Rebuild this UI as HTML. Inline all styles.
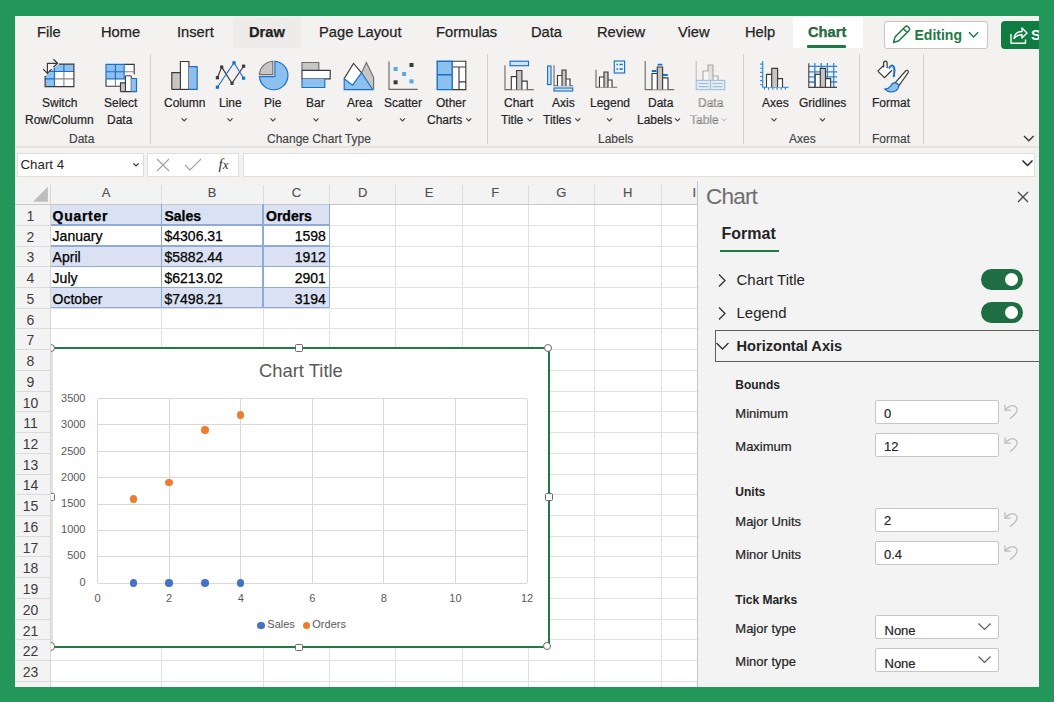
<!DOCTYPE html>
<html><head><meta charset="utf-8">
<style>
*{box-sizing:border-box;margin:0;padding:0}
html,body{width:1054px;height:702px;overflow:hidden;background:#23965a}
body{position:relative;font-family:"Liberation Sans",sans-serif;color:#242424}
#app{position:absolute;left:15px;top:16px;width:1024px;height:671px;background:#f3f2f1;overflow:hidden}
.a{position:absolute}
.t{position:absolute;white-space:nowrap;line-height:1}
.tab{font-size:14.7px;color:#242424;-webkit-text-stroke:0.25px #242424}
.rl{font-size:12px;color:#242424;-webkit-text-stroke:0.2px #242424}
.gl{font-size:12px;color:#424242;-webkit-text-stroke:0.15px #424242}
.sep{position:absolute;width:1px;background:#d2d0ce}
.chev{position:absolute;width:5px;height:5px;border-right:1.3px solid #484644;border-bottom:1.3px solid #484644;transform:rotate(45deg)}
.hdr{font-size:13px;color:#505050;-webkit-text-stroke:0.15px #505050}
.rowh{font-size:14px;color:#3c3c3c}
.cell{font-size:14px;color:#000;-webkit-text-stroke:0.25px #000}
.ax{font-size:11px;color:#595959}
.dot{width:7.5px;height:7.5px;border-radius:50%}
.pb{font-size:12px;font-weight:bold;color:#242424}
.pl{font-size:13px;color:#242424;-webkit-text-stroke:0.2px #242424}
.pv{font-size:13px;color:#242424;-webkit-text-stroke:0.2px #242424}
.inp{width:124px;height:24px;background:#fff;border:1.3px solid #c8c6c4;border-radius:2px}
</style></head><body>
<div id="app">
<div style="position:absolute;left:-15px;top:-16px;width:1054px;height:702px">
<!-- TAB BAR -->
<div class="a" style="left:233px;top:17px;width:68px;height:31px;background:#edecea"></div>
<div class="a" style="left:793px;top:17px;width:70px;height:31px;background:#fff"></div>
<div class="t tab" style="left:37px;top:25px">File</div>
<div class="t tab" style="left:101px;top:25px">Home</div>
<div class="t tab" style="left:177px;top:25px">Insert</div>
<div class="t tab" style="left:249px;top:25px;font-weight:bold;color:#242424">Draw</div>
<div class="t tab" style="left:319px;top:25px">Page Layout</div>
<div class="t tab" style="left:436px;top:25px">Formulas</div>
<div class="t tab" style="left:531px;top:25px">Data</div>
<div class="t tab" style="left:597px;top:25px">Review</div>
<div class="t tab" style="left:678px;top:25px">View</div>
<div class="t tab" style="left:745px;top:25px">Help</div>
<div class="t tab" style="left:808px;top:25px;font-weight:bold;color:#1e7a45">Chart</div>
<div class="a" style="left:807px;top:45px;width:39px;height:3px;background:#1e7a45;border-radius:1px"></div>
<!-- Editing button -->
<div class="a" style="left:884px;top:20.5px;width:104px;height:28px;background:#fff;border:1.5px solid #c8c6c4;border-radius:3px"></div>
<div class="t" style="left:914.5px;top:28px;font-size:14px;font-weight:bold;color:#1e7a45">Editing</div>
<!-- Share button -->
<div class="a" style="left:1001px;top:20.5px;width:60px;height:28px;background:#107c41;border-radius:4px"></div>
<div class="t" style="left:1031px;top:27.5px;font-size:14.7px;font-weight:bold;color:#fff">Share</div>

<!-- RIBBON labels -->
<div class="t rl" style="left:42px;top:97px">Switch</div>
<div class="t rl" style="left:25px;top:113.5px">Row/Column</div>
<div class="t rl" style="left:104px;top:97px">Select</div>
<div class="t rl" style="left:107px;top:113.5px">Data</div>
<div class="t gl" style="left:69px;top:133px">Data</div>
<div class="sep" style="left:150px;top:54px;height:90px"></div>

<div class="t rl" style="left:164px;top:97px">Column</div>
<div class="t rl" style="left:219px;top:97px">Line</div>
<div class="t rl" style="left:264px;top:97px">Pie</div>
<div class="t rl" style="left:306px;top:97px">Bar</div>
<div class="t rl" style="left:347px;top:97px">Area</div>
<div class="t rl" style="left:384px;top:97px">Scatter</div>
<div class="t rl" style="left:436px;top:97px">Other</div>
<div class="t rl" style="left:427px;top:113.5px">Charts</div>
<div class="t gl" style="left:267px;top:133px">Change Chart Type</div>
<div class="sep" style="left:487px;top:54px;height:90px"></div>

<div class="t rl" style="left:504px;top:97px">Chart</div>
<div class="t rl" style="left:501px;top:113.5px">Title</div>
<div class="t rl" style="left:552px;top:97px">Axis</div>
<div class="t rl" style="left:543px;top:113.5px">Titles</div>
<div class="t rl" style="left:590px;top:97px">Legend</div>
<div class="t rl" style="left:648px;top:97px">Data</div>
<div class="t rl" style="left:637px;top:113.5px">Labels</div>
<div class="t rl" style="left:698px;top:97px;color:#bebbb8">Data</div>
<div class="t rl" style="left:690px;top:113.5px;color:#bebbb8">Table</div>
<div class="t gl" style="left:598px;top:133px">Labels</div>
<div class="sep" style="left:743px;top:54px;height:90px"></div>

<div class="t rl" style="left:762px;top:97px">Axes</div>
<div class="t rl" style="left:799px;top:97px">Gridlines</div>
<div class="t gl" style="left:789px;top:133px">Axes</div>
<div class="sep" style="left:859px;top:54px;height:90px"></div>
<div class="t rl" style="left:872px;top:97px">Format</div>
<div class="t gl" style="left:872px;top:133px">Format</div>
<div class="sep" style="left:923px;top:54px;height:90px"></div>

<!-- RIBBON ICONS -->
<svg class="a" style="left:0;top:0" width="1054" height="150" viewBox="0 0 1054 150">
<defs>
<style>
.ds{stroke:#3b3a39;stroke-width:1.15;fill:none}
.bs{stroke:#1c6fc2;stroke-width:1.15;fill:none}
.bf{fill:#8cc0ee}
.gf{fill:#c8c6c4}
.wf{fill:#fff}
.ch{stroke:#484644;stroke-width:1.2;fill:none}
</style>
</defs>
<!-- Switch Row/Column -->
<path class="wf" d="M45.1 76 L59 64.1 H73.9 V86.6 H45.1 Z"/>
<path class="bf" d="M45.1 76 L59 64.1 H73.9 V71.5 H54.5 V86.6 H45.1 Z"/>
<path stroke="#8a8886" stroke-width="1.1" fill="none" d="M54.5 78.9 H73.9 M63.9 71.5 V86.6"/>
<path class="bs" d="M54.5 67.8 V86.6 M50 71.5 H73.9 M45.1 78.9 H54.5 M63.9 64.1 V71.5"/>
<path class="ds" d="M59 64.1 H73.9 V86.6 H45.1 V76"/>
<path class="ds" d="M47.4 72.6 V63.3 H57.3 M53.4 59.3 L57.6 63.3 L53.4 67.3 M43.2 69.1 L47.4 73.3 L51.6 69.1" style="stroke-width:1.2"/>
<!-- Select Data -->
<path class="bf" d="M106 64.3 H124.2 V78.8 H106 Z"/>
<path class="wf" d="M124.2 64.3 H134.2 V86.2 H106 V78.8 H124.2 Z"/>
<path class="ds" d="M124.2 64.3 H134.2 V74.5 M120 86.2 H106 V78.8"/>
<path stroke="#8a8886" stroke-width="1.1" fill="none" d="M124.2 71.7 H134.2 M115.4 78.8 V86.2"/>
<path class="bs" d="M106 78.8 V64.3 H124.2 V78.8 H106 M115.4 64.3 V78.8 M106 71.7 H124.2"/>
<path class="gf" d="M120.5 82.8 H125.4 V91.6 H120.5 Z"/><path class="ds" d="M120.5 91.6 V82.8 H125.4"/>
<path class="wf" d="M125.4 91.6 V76.8 Q125.4 75.7 126.5 75.7 H130.2 Q131.3 75.7 131.3 76.8 V91.6 Z"/>
<path class="ds" d="M120.5 91.6 H131.3 M125.4 91.6 V76.8 Q125.4 75.7 126.5 75.7 H130.2 Q131.3 75.7 131.3 76.8 V91.6"/>
<path class="bf" d="M131.3 78.5 H136.5 V91.6 H131.3 Z"/><path class="bs" d="M131.3 78.5 H136.5 V91.6 H131.3"/>
<!-- Column -->
<path class="gf" d="M171.8 72.6 H180.4 V89.4 H171.8 Z"/><path class="ds" d="M171.8 89.4 V72.6 H180.4"/>
<path class="wf" d="M180.4 61.5 H188.9 V89.4 H180.4 Z"/><path class="ds" d="M180.4 89.4 V61.5 H188.9 V89.4"/>
<path class="bf" d="M188.9 66.6 H197.2 V89.4 H188.9 Z"/><path class="bs" d="M188.9 66.6 H197.2 V89.4 H188.9"/>
<path class="ds" d="M171.8 89.4 H188.9"/>
<!-- Line -->
<path class="ds" d="M217.4 77.7 L221.7 67.1 L232 83.3 L243.6 66.2"/>
<path class="bs" d="M217.4 87.2 L234 62.8 L243.6 78.2"/>
<g fill="#3b3a39"><rect x="215.8" y="76.1" width="3.2" height="3.2"/><rect x="220.1" y="65.5" width="3.2" height="3.2"/><rect x="230.4" y="81.7" width="3.2" height="3.2"/><rect x="242" y="64.6" width="3.2" height="3.2"/></g>
<g fill="#1c6fc2"><rect x="215.8" y="85.6" width="3.2" height="3.2"/><rect x="232.4" y="61.2" width="3.2" height="3.2"/><rect x="242" y="76.6" width="3.2" height="3.2"/></g>
<!-- Pie -->
<path class="bf" d="M274.9 76.6 V61.2 A14.3 14.3 0 1 1 259.4 76.6 Z"/>
<path class="bs" d="M274.9 76.6 V61.2 A14.3 14.3 0 1 1 259.4 76.6 Z"/>
<path class="gf" d="M272.8 74.6 V61.2 A14.3 14.3 0 0 0 259.4 74.6 Z"/>
<path class="ds" d="M272.8 74.6 V61.2 A14.3 14.3 0 0 0 259.4 74.6 Z" style="stroke:#6e6d6b"/>
<!-- Bar -->
<path class="gf" d="M302 62.5 H318.8 V70.4 H302 Z"/><path class="ds" d="M302 70.4 V62.5 H318.8 V70.4" style="stroke:#6e6d6b"/>
<path class="wf" d="M302 70.4 H330.2 V78.8 H302 Z"/><path class="ds" d="M302 70.4 H330.2 V78.8 H302 Z"/>
<path class="bf" d="M302 78.8 H324.8 V87.5 H302 Z"/><path class="bs" d="M302 78.8 V87.5 H324.8 V78.8"/>
<!-- Area -->
<path class="gf" d="M361.6 72.8 L366.4 62.6 L373.6 77.3 V89.6 Z"/>
<path class="ds" d="M361.6 72.8 L366.4 62.6 L373.6 77.3 V89.6" style="stroke:#6e6d6b"/>
<path class="wf" d="M344.2 78.6 L353.5 63.4 L361.6 72.8 L352.5 85 Z"/>
<path class="ds" d="M344.2 78.6 L353.5 63.4 L361.6 72.8"/>
<path class="bf" d="M344.2 78.8 L352.5 85.2 L361.6 72.8 L372.8 89.6 H344.2 Z"/>
<path class="bs" d="M344.2 78.8 L352.5 85.2 L361.6 72.8 L372.8 89.6 H344.2 Z"/>
<!-- Scatter -->
<path class="ds" d="M389 61.4 V89.4 H417.7" style="stroke:#6e6d6b"/>
<g fill="#3b3a39"><rect x="409.5" y="63" width="4" height="4"/><rect x="393.6" y="80.3" width="4" height="4"/></g>
<g fill="#5aa6ec"><rect x="393.6" y="67" width="4" height="4"/><rect x="402.1" y="72" width="4" height="4"/><rect x="409.5" y="79.4" width="4" height="4"/></g>
<!-- Other charts -->
<path class="wf" d="M452.2 61.2 H465.8 V89.6 H452.2 Z"/>
<path class="ds" d="M452.2 61.2 H465.8 V89.6 H452.2 M452.2 67 H465.8 M459 67 V89.6 M459 81.9 H465.8"/>
<path class="bf" d="M437.2 61.2 H452.2 V89.6 H437.2 Z"/>
<path class="bs" d="M437.2 61.2 H452.2 V89.6 H437.2 Z M437.2 74.7 H452.2" style="stroke-width:1.4"/>
<!-- Chart Title -->
<rect x="510" y="61.2" width="18.5" height="4.5" class="bf" style="fill:#cfe4f7"/><rect x="510" y="61.2" width="18.5" height="4.5" class="bs"/>
<path class="ds" d="M505 65.2 V89.6 H533.7" style="stroke:#6e6d6b"/>
<path class="wf" d="M511.3 76.6 H516.6 V89.6 H511.3 Z M521.9 81.1 H527.2 V89.6 H521.9 Z"/>
<path class="gf" d="M516.6 70.5 H521.9 V89.6 H516.6 Z"/>
<path class="ds" d="M511.3 89.6 V76.6 H516.6 V70.5 H521.9 V89.6 M521.9 81.1 H527.2 V89.6 M516.6 76.6 V89.6"/>
<!-- Axis Titles -->
<rect x="547.6" y="66" width="3.4" height="18.6" class="bf" style="fill:#cfe4f7"/><rect x="547.6" y="66" width="3.4" height="18.6" class="bs"/>
<rect x="554" y="88" width="18.7" height="3" class="bf" style="fill:#cfe4f7"/><rect x="554" y="88" width="18.7" height="3" class="bs"/>
<path class="ds" d="M554 65.2 V85.7 H573.2" style="stroke:#6e6d6b"/>
<path class="wf" d="M557.5 75.5 H562 V85.7 H557.5 Z M566 79 H570 V85.7 H566 Z"/>
<path class="gf" d="M562 70 H566 V85.7 H562 Z"/>
<path class="ds" d="M557.5 85.7 V75.5 H562 V70 H566 V85.7 M566 79 H570 V85.7 M562 75.5 V85.7"/>
<!-- Legend -->
<path class="ds" d="M596 69.7 V87.2 H617.2" style="stroke:#6e6d6b"/>
<path class="wf" d="M599.5 77 H604 V87.2 H599.5 Z M608 80 H612 V87.2 H608 Z"/>
<path class="gf" d="M604 72 H608 V87.2 H604 Z"/>
<path class="ds" d="M599.5 87.2 V77 H604 V72 H608 V87.2 M608 80 H612 V87.2 M604 77 V87.2"/>
<rect x="614.3" y="61" width="10.3" height="12" class="bs" style="fill:#e8f2fb"/>
<path stroke="#1c6fc2" stroke-width="1.4" d="M616.5 64.5 H618 M619.5 64.5 H622.8 M616.5 69 H618 M619.5 69 H622.8"/>
<!-- Data Labels -->
<path class="ds" d="M645.2 60.9 V89.6 H674.3" style="stroke:#6e6d6b"/>
<path class="wf" d="M652 73.5 H657.3 V89.6 H652 Z M662.6 77.8 H668 V89.6 H662.6 Z"/>
<path class="gf" d="M657.3 67 H662.6 V89.6 H657.3 Z"/>
<path class="ds" d="M652 89.6 V73.5 H657.3 V67 H662.6 V89.6 M662.6 77.8 H668 V89.6 M657.3 73.5 V89.6"/>
<path stroke="#1c6fc2" stroke-width="1.8" d="M651.8 71 H656.5 M657.6 64.7 H662.3 M663 75 H667.8"/>
<!-- Data Table (disabled) -->
<g opacity="0.38">
<path class="ds" d="M696.2 60.9 V80.4" style="stroke:#6e6d6b"/>
<path class="wf" d="M703 71 H708 V80.4 H703 Z M713 76 H718 V80.4 H713 Z"/>
<path class="gf" d="M708 65 H713 V80.4 H708 Z"/>
<path class="ds" d="M703 80.4 V71 H708 V65 H713 V80.4 M713 76 H718 V80.4"/>
<rect x="696.2" y="80.4" width="28.5" height="9.2" class="bs" style="fill:#cfe4f7"/>
<path class="bs" d="M710.5 80.4 V89.6 M698.5 83.5 H708.5 M712.5 83.5 H722.5 M698.5 86.6 H708.5 M712.5 86.6 H722.5"/>
</g>
<!-- Axes -->
<path class="bs" d="M762.7 61.1 V87.2 H788.7 M760.1 64.1 H762.7 M760.1 68.2 H762.7 M760.1 72.3 H762.7 M760.1 76.5 H762.7 M760.1 80.6 H762.7 M760.1 84.7 H762.7 M764.4 87.2 V89.8 M768.6 87.2 V89.8 M772.8 87.2 V89.8 M777 87.2 V89.8 M781.2 87.2 V89.8 M785.4 87.2 V89.8" style="stroke:#2b88d8"/>
<path class="wf" d="M766.5 74.4 H771.7 V87.2 H766.5 Z M777.6 78.6 H782.5 V87.2 H777.6 Z"/>
<path class="gf" d="M771.7 68.4 H777.6 V87.2 H771.7 Z"/>
<path class="ds" d="M766.5 87.2 V74.4 H771.7 V68.4 H777.6 V87.2 M777.6 78.6 H782.5 V87.2 M771.7 74.4 V87.2"/>
<!-- Gridlines -->
<path class="bs" d="M814.8 63 V87.3 M821.2 63 V87.3 M827.4 63 V87.3 M833.7 63 V87.3 M808.8 66.4 H837.2 M808.8 71.8 H837.2 M808.8 76.9 H837.2 M808.8 82 H837.2" style="stroke:#2b88d8;stroke-width:1.3"/>
<path class="wf" d="M815.2 74.4 H820.3 V87.3 H815.2 Z M825.5 78.6 H830.6 V87.3 H825.5 Z"/>
<path class="gf" d="M820.3 68.4 H825.5 V87.3 H820.3 Z"/>
<path class="ds" d="M815.2 87.3 V74.4 H820.3 V68.4 H825.5 V87.3 M825.5 78.6 H830.6 V87.3 M820.3 74.4 V87.3"/>
<path class="ds" d="M808.8 63.3 V87.4 H837" style="stroke:#484644"/>
<!-- Format -->
<path class="wf" d="M877.8 71.1 L884.5 77.7 L891.9 70.2 L887.1 65.7 Z"/>
<path class="ds" d="M877.8 71.1 L884.5 77.7 L891.9 70.2 M877.8 71.1 L883.6 65.4 M883.6 67.5 V63.2 Q883.6 61.1 885.4 61.1 Q887.1 61.1 887.1 63.2 V68.3" style="stroke-width:1.25"/>
<path d="M889.4 67.6 Q892.6 63.6 894.2 67.8 Q894.9 71 893.8 76.3" fill="none" stroke="#1c6fc2" stroke-width="2.1" stroke-linecap="round"/><path d="M890.2 67.2 Q892.4 65.4 893.3 68" fill="none" stroke="#8cc0ee" stroke-width="0.9"/>
<path d="M894.6 83.4 L905.6 71 Q907.6 69.4 908.4 71.6 Q908.4 72.4 907.8 73.2 L898.4 86.4 Z" fill="#fff" stroke="#3b3a39" stroke-width="1.15" stroke-linejoin="round"/>
<path d="M894.4 82.6 Q898.9 83.2 898.6 86.8 Q897.6 91.4 891.2 91.9 Q887.4 92 884.8 89.2 Q888.6 88.9 890.4 86.4 Q891.9 83.2 894.4 82.6 Z" fill="#8cc0ee" stroke="#1c6fc2" stroke-width="1.2"/>
<!-- chevrons -->
<path class="ch" d="M181.7 118.3 L184.2 120.8 L186.7 118.3"/>
<path class="ch" d="M227.5 118.3 L230 120.8 L232.5 118.3"/>
<path class="ch" d="M270.5 118.3 L273 120.8 L275.5 118.3"/>
<path class="ch" d="M313.5 118.3 L316 120.8 L318.5 118.3"/>
<path class="ch" d="M356.5 118.3 L359 120.8 L361.5 118.3"/>
<path class="ch" d="M400 118.3 L402.5 120.8 L405 118.3"/>
<path class="ch" d="M466.3 118.3 L468.8 120.8 L471.3 118.3"/>
<path class="ch" d="M527.5 118.3 L530 120.8 L532.5 118.3"/>
<path class="ch" d="M575.3 118.3 L577.8 120.8 L580.3 118.3"/>
<path class="ch" d="M607 118.3 L609.5 120.8 L612 118.3"/>
<path class="ch" d="M675 118.3 L677.5 120.8 L680 118.3"/>
<path class="ch" d="M721.5 118.3 L724 120.8 L726.5 118.3" style="stroke:#c8c6c4"/>
<path class="ch" d="M771.5 118.3 L774 120.8 L776.5 118.3"/>
<path class="ch" d="M820 118.3 L822.5 120.8 L825 118.3"/>
<path d="M1024 136 L1028.8 140.8 L1033.6 136" stroke="#323130" stroke-width="1.3" fill="none"/>
<!-- Editing pencil & chevron -->
<path d="M893.6 42.6 L895 37 L905.2 26.8 Q906.6 25.5 908 26.8 L909 27.8 Q910.3 29.2 909 30.6 L898.8 40.8 Z M903.3 28.7 L907.1 32.5" stroke="#1e7a45" stroke-width="1.5" fill="none" stroke-linejoin="round"/>
<path d="M969 32.3 L973.6 36.9 L978.2 32.3" stroke="#1e7a45" stroke-width="1.4" fill="none"/>
<!-- Share icon -->
<path d="M1011 34 V43.3 H1025.5 V39.5 M1014 38.5 Q1015 31.5 1022 31.5 V28 L1027 33 L1022 38 V34.8 Q1017.5 34.5 1014 38.5 Z" stroke="#fff" stroke-width="1.4" fill="none" stroke-linejoin="round"/>
</svg>

<!-- ribbon bottom shadow -->
<div class="a" style="left:15px;top:146px;width:1024px;height:2px;background:#e6e4e2"></div>

<!-- FORMULA BAR -->
<div class="a" style="left:17px;top:152.5px;width:126.5px;height:24.5px;background:#fff;border:1px solid #e1dfdd"></div>
<div class="t" style="left:20.5px;top:157.8px;font-size:13.3px;color:#242424">Chart 4</div>
<svg class="a" style="left:132px;top:161.5px" width="8" height="6"><path d="M1.3 1.3 L4 4 L6.7 1.3" fill="none" stroke="#323130" stroke-width="1.2"/></svg>
<div class="a" style="left:147px;top:152.5px;width:92px;height:24.5px;background:#fff;border:1px solid #e1dfdd"></div>
<svg class="a" style="left:156px;top:158px" width="14" height="14"><path d="M1 1 L13 13 M13 1 L1 13" stroke="#a19f9d" stroke-width="1.1" fill="none"/></svg>
<svg class="a" style="left:184px;top:158px" width="18" height="13"><path d="M1 7 L6 12 L17 1" stroke="#a19f9d" stroke-width="1.1" fill="none"/></svg>
<div class="t" style="left:218.5px;top:157px;font-family:'Liberation Serif',serif;font-style:italic;font-size:15px;color:#323130">f<span style="font-size:13px">x</span></div>
<div class="a" style="left:243px;top:152.5px;width:792px;height:24px;background:#fff;border:1px solid #e1dfdd"></div>
<svg class="a" style="left:1021px;top:159px" width="13" height="9"><path d="M1.5 1.5 L6.5 6.5 L11.5 1.5" fill="none" stroke="#242424" stroke-width="1.5"/></svg>

<div class="a" style="left:15px;top:184px;width:682px;height:20px;background:#f3f3f3"></div>
<div class="a" style="left:15px;top:204px;width:35.5px;height:483px;background:#f3f3f3"></div>
<div class="a" style="left:50.5px;top:204.5px;width:647px;height:483px;background:#fff"></div>
<div class="a" style="left:15px;top:203.5px;width:682px;height:1px;background:#c8c8c8"></div>
<div class="a" style="left:49.5px;top:185px;width:1.2px;height:502px;background:#d6d6d6"></div>
<svg class="a" style="left:32px;top:186px" width="17" height="17"><path d="M1 15.7 L15.9 15.7 L15.9 0.7 Z" fill="#bdbdbd"/></svg>
<div class="a" style="left:161.0px;top:185px;width:1px;height:19px;background:#dcdcdc"></div>
<div class="a" style="left:161.0px;top:204.5px;width:1px;height:483px;background:#e1e1e1"></div>
<div class="a" style="left:262.5px;top:185px;width:1px;height:19px;background:#dcdcdc"></div>
<div class="a" style="left:262.5px;top:204.5px;width:1px;height:483px;background:#e1e1e1"></div>
<div class="a" style="left:329.2px;top:185px;width:1px;height:19px;background:#dcdcdc"></div>
<div class="a" style="left:329.2px;top:204.5px;width:1px;height:483px;background:#e1e1e1"></div>
<div class="a" style="left:395.3px;top:185px;width:1px;height:19px;background:#dcdcdc"></div>
<div class="a" style="left:395.3px;top:204.5px;width:1px;height:483px;background:#e1e1e1"></div>
<div class="a" style="left:461.8px;top:185px;width:1px;height:19px;background:#dcdcdc"></div>
<div class="a" style="left:461.8px;top:204.5px;width:1px;height:483px;background:#e1e1e1"></div>
<div class="a" style="left:527.8px;top:185px;width:1px;height:19px;background:#dcdcdc"></div>
<div class="a" style="left:527.8px;top:204.5px;width:1px;height:483px;background:#e1e1e1"></div>
<div class="a" style="left:594.0px;top:185px;width:1px;height:19px;background:#dcdcdc"></div>
<div class="a" style="left:594.0px;top:204.5px;width:1px;height:483px;background:#e1e1e1"></div>
<div class="a" style="left:660.6px;top:185px;width:1px;height:19px;background:#dcdcdc"></div>
<div class="a" style="left:660.6px;top:204.5px;width:1px;height:483px;background:#e1e1e1"></div>
<div class="a" style="left:726.8px;top:185px;width:1px;height:19px;background:#dcdcdc"></div>
<div class="a" style="left:726.8px;top:204.5px;width:1px;height:483px;background:#e1e1e1"></div>
<div class="t hdr" style="left:96.0px;top:185.5px;width:20px;text-align:center">A</div>
<div class="t hdr" style="left:202.2px;top:185.5px;width:20px;text-align:center">B</div>
<div class="t hdr" style="left:286.4px;top:185.5px;width:20px;text-align:center">C</div>
<div class="t hdr" style="left:352.8px;top:185.5px;width:20px;text-align:center">D</div>
<div class="t hdr" style="left:419.1px;top:185.5px;width:20px;text-align:center">E</div>
<div class="t hdr" style="left:485.3px;top:185.5px;width:20px;text-align:center">F</div>
<div class="t hdr" style="left:551.4px;top:185.5px;width:20px;text-align:center">G</div>
<div class="t hdr" style="left:617.8px;top:185.5px;width:20px;text-align:center">H</div>
<div class="t hdr" style="left:684.2px;top:185.5px;width:20px;text-align:center">I</div>
<div class="a" style="left:15px;top:224.7px;width:35px;height:1px;background:#dcdcdc"></div>
<div class="a" style="left:50.5px;top:224.7px;width:647px;height:1px;background:#e1e1e1"></div>
<div class="a" style="left:15px;top:245.5px;width:35px;height:1px;background:#dcdcdc"></div>
<div class="a" style="left:50.5px;top:245.5px;width:647px;height:1px;background:#e1e1e1"></div>
<div class="a" style="left:15px;top:266.2px;width:35px;height:1px;background:#dcdcdc"></div>
<div class="a" style="left:50.5px;top:266.2px;width:647px;height:1px;background:#e1e1e1"></div>
<div class="a" style="left:15px;top:286.9px;width:35px;height:1px;background:#dcdcdc"></div>
<div class="a" style="left:50.5px;top:286.9px;width:647px;height:1px;background:#e1e1e1"></div>
<div class="a" style="left:15px;top:307.6px;width:35px;height:1px;background:#dcdcdc"></div>
<div class="a" style="left:50.5px;top:307.6px;width:647px;height:1px;background:#e1e1e1"></div>
<div class="a" style="left:15px;top:328.4px;width:35px;height:1px;background:#dcdcdc"></div>
<div class="a" style="left:50.5px;top:328.4px;width:647px;height:1px;background:#e1e1e1"></div>
<div class="a" style="left:15px;top:349.1px;width:35px;height:1px;background:#dcdcdc"></div>
<div class="a" style="left:50.5px;top:349.1px;width:647px;height:1px;background:#e1e1e1"></div>
<div class="a" style="left:15px;top:369.8px;width:35px;height:1px;background:#dcdcdc"></div>
<div class="a" style="left:50.5px;top:369.8px;width:647px;height:1px;background:#e1e1e1"></div>
<div class="a" style="left:15px;top:390.5px;width:35px;height:1px;background:#dcdcdc"></div>
<div class="a" style="left:50.5px;top:390.5px;width:647px;height:1px;background:#e1e1e1"></div>
<div class="a" style="left:15px;top:411.3px;width:35px;height:1px;background:#dcdcdc"></div>
<div class="a" style="left:50.5px;top:411.3px;width:647px;height:1px;background:#e1e1e1"></div>
<div class="a" style="left:15px;top:432.0px;width:35px;height:1px;background:#dcdcdc"></div>
<div class="a" style="left:50.5px;top:432.0px;width:647px;height:1px;background:#e1e1e1"></div>
<div class="a" style="left:15px;top:452.7px;width:35px;height:1px;background:#dcdcdc"></div>
<div class="a" style="left:50.5px;top:452.7px;width:647px;height:1px;background:#e1e1e1"></div>
<div class="a" style="left:15px;top:473.5px;width:35px;height:1px;background:#dcdcdc"></div>
<div class="a" style="left:50.5px;top:473.5px;width:647px;height:1px;background:#e1e1e1"></div>
<div class="a" style="left:15px;top:494.2px;width:35px;height:1px;background:#dcdcdc"></div>
<div class="a" style="left:50.5px;top:494.2px;width:647px;height:1px;background:#e1e1e1"></div>
<div class="a" style="left:15px;top:514.9px;width:35px;height:1px;background:#dcdcdc"></div>
<div class="a" style="left:50.5px;top:514.9px;width:647px;height:1px;background:#e1e1e1"></div>
<div class="a" style="left:15px;top:535.6px;width:35px;height:1px;background:#dcdcdc"></div>
<div class="a" style="left:50.5px;top:535.6px;width:647px;height:1px;background:#e1e1e1"></div>
<div class="a" style="left:15px;top:556.4px;width:35px;height:1px;background:#dcdcdc"></div>
<div class="a" style="left:50.5px;top:556.4px;width:647px;height:1px;background:#e1e1e1"></div>
<div class="a" style="left:15px;top:577.1px;width:35px;height:1px;background:#dcdcdc"></div>
<div class="a" style="left:50.5px;top:577.1px;width:647px;height:1px;background:#e1e1e1"></div>
<div class="a" style="left:15px;top:597.8px;width:35px;height:1px;background:#dcdcdc"></div>
<div class="a" style="left:50.5px;top:597.8px;width:647px;height:1px;background:#e1e1e1"></div>
<div class="a" style="left:15px;top:618.5px;width:35px;height:1px;background:#dcdcdc"></div>
<div class="a" style="left:50.5px;top:618.5px;width:647px;height:1px;background:#e1e1e1"></div>
<div class="a" style="left:15px;top:639.3px;width:35px;height:1px;background:#dcdcdc"></div>
<div class="a" style="left:50.5px;top:639.3px;width:647px;height:1px;background:#e1e1e1"></div>
<div class="a" style="left:15px;top:660.0px;width:35px;height:1px;background:#dcdcdc"></div>
<div class="a" style="left:50.5px;top:660.0px;width:647px;height:1px;background:#e1e1e1"></div>
<div class="a" style="left:15px;top:680.7px;width:35px;height:1px;background:#dcdcdc"></div>
<div class="a" style="left:50.5px;top:680.7px;width:647px;height:1px;background:#e1e1e1"></div>
<div class="a" style="left:15px;top:701.4px;width:35px;height:1px;background:#dcdcdc"></div>
<div class="a" style="left:50.5px;top:701.4px;width:647px;height:1px;background:#e1e1e1"></div>
<div class="t rowh" style="left:15px;top:209.0px;width:31px;text-align:center">1</div>
<div class="t rowh" style="left:15px;top:229.7px;width:31px;text-align:center">2</div>
<div class="t rowh" style="left:15px;top:250.4px;width:31px;text-align:center">3</div>
<div class="t rowh" style="left:15px;top:271.1px;width:31px;text-align:center">4</div>
<div class="t rowh" style="left:15px;top:291.9px;width:31px;text-align:center">5</div>
<div class="t rowh" style="left:15px;top:312.6px;width:31px;text-align:center">6</div>
<div class="t rowh" style="left:15px;top:333.3px;width:31px;text-align:center">7</div>
<div class="t rowh" style="left:15px;top:354.1px;width:31px;text-align:center">8</div>
<div class="t rowh" style="left:15px;top:374.8px;width:31px;text-align:center">9</div>
<div class="t rowh" style="left:15px;top:395.5px;width:31px;text-align:center">10</div>
<div class="t rowh" style="left:15px;top:416.2px;width:31px;text-align:center">11</div>
<div class="t rowh" style="left:15px;top:437.0px;width:31px;text-align:center">12</div>
<div class="t rowh" style="left:15px;top:457.7px;width:31px;text-align:center">13</div>
<div class="t rowh" style="left:15px;top:478.4px;width:31px;text-align:center">14</div>
<div class="t rowh" style="left:15px;top:499.1px;width:31px;text-align:center">15</div>
<div class="t rowh" style="left:15px;top:519.9px;width:31px;text-align:center">16</div>
<div class="t rowh" style="left:15px;top:540.6px;width:31px;text-align:center">17</div>
<div class="t rowh" style="left:15px;top:561.3px;width:31px;text-align:center">18</div>
<div class="t rowh" style="left:15px;top:582.0px;width:31px;text-align:center">19</div>
<div class="t rowh" style="left:15px;top:602.8px;width:31px;text-align:center">20</div>
<div class="t rowh" style="left:15px;top:623.5px;width:31px;text-align:center">21</div>
<div class="t rowh" style="left:15px;top:644.2px;width:31px;text-align:center">22</div>
<div class="t rowh" style="left:15px;top:665.0px;width:31px;text-align:center">23</div>
<div class="t rowh" style="left:15px;top:685.7px;width:31px;text-align:center">24</div>
<div class="a" style="left:50.5px;top:204.9px;width:279.2px;height:20.0px;background:#d9e1f2"></div>
<div class="a" style="left:50.5px;top:224.9px;width:279.2px;height:20.9px;background:#fff"></div>
<div class="a" style="left:50.5px;top:245.8px;width:279.2px;height:20.9px;background:#d9e1f2"></div>
<div class="a" style="left:50.5px;top:266.7px;width:279.2px;height:20.7px;background:#fff"></div>
<div class="a" style="left:50.5px;top:287.4px;width:279.2px;height:20.1px;background:#d9e1f2"></div>
<div class="a" style="left:50.5px;top:224.15px;width:279.9px;height:1.5px;background:#8eaadb"></div>
<div class="a" style="left:50.5px;top:245.05px;width:279.9px;height:1.5px;background:#8eaadb"></div>
<div class="a" style="left:50.5px;top:265.95px;width:279.9px;height:1.5px;background:#8eaadb"></div>
<div class="a" style="left:50.5px;top:286.65px;width:279.9px;height:1.5px;background:#8eaadb"></div>
<div class="a" style="left:50.5px;top:306.75px;width:279.9px;height:1.5px;background:#8eaadb"></div>
<div class="a" style="left:160.95px;top:204.15px;width:1.5px;height:104.1px;background:#8eaadb"></div>
<div class="a" style="left:262.25px;top:204.15px;width:1.5px;height:104.1px;background:#8eaadb"></div>
<div class="a" style="left:328.95px;top:204.15px;width:1.5px;height:104.1px;background:#8eaadb"></div>
<div class="t cell" style="left:52.6px;top:209.3px;font-weight:bold;letter-spacing:0.7px;">Quarter</div>
<div class="t cell" style="left:164.5px;top:209.3px;font-weight:bold;">Sales</div>
<div class="t cell" style="left:266px;top:209.3px;font-weight:bold;">Orders</div>
<div class="t cell" style="left:52.6px;top:229.3px;">January</div>
<div class="t cell" style="left:164.5px;top:229.3px;">$4306.31</div>
<div class="t cell" style="left:226px;width:99.8px;text-align:right;top:229.3px">1598</div>
<div class="t cell" style="left:52.6px;top:250.2px;">April</div>
<div class="t cell" style="left:164.5px;top:250.2px;">$5882.44</div>
<div class="t cell" style="left:226px;width:99.8px;text-align:right;top:250.2px">1912</div>
<div class="t cell" style="left:52.6px;top:271.1px;">July</div>
<div class="t cell" style="left:164.5px;top:271.1px;">$6213.02</div>
<div class="t cell" style="left:226px;width:99.8px;text-align:right;top:271.1px">2901</div>
<div class="t cell" style="left:52.6px;top:291.8px;">October</div>
<div class="t cell" style="left:164.5px;top:291.8px;">$7498.21</div>
<div class="t cell" style="left:226px;width:99.8px;text-align:right;top:291.8px">3194</div>
<div class="a" style="left:50.5px;top:0;width:1003px;height:702px;overflow:hidden"><div class="a" style="left:-50.5px;top:0;width:1054px;height:702px">
<!-- CHART -->
<div class="a" style="left:50.8px;top:346.8px;width:499.2px;height:301.2px;background:#fff;border:2px solid #1e7b45;border-left:2.2px solid #e3e3e3"></div>
<div class="a" style="left:97.0px;top:398.6px;width:1px;height:184.4px;background:#d9d9d9"></div>
<div class="t ax" style="left:82.5px;top:592.5px;width:30px;text-align:center">0</div>
<div class="a" style="left:168.6px;top:398.6px;width:1px;height:184.4px;background:#d9d9d9"></div>
<div class="t ax" style="left:154.1px;top:592.5px;width:30px;text-align:center">2</div>
<div class="a" style="left:240.2px;top:398.6px;width:1px;height:184.4px;background:#d9d9d9"></div>
<div class="t ax" style="left:225.7px;top:592.5px;width:30px;text-align:center">4</div>
<div class="a" style="left:311.8px;top:398.6px;width:1px;height:184.4px;background:#d9d9d9"></div>
<div class="t ax" style="left:297.2px;top:592.5px;width:30px;text-align:center">6</div>
<div class="a" style="left:383.3px;top:398.6px;width:1px;height:184.4px;background:#d9d9d9"></div>
<div class="t ax" style="left:368.8px;top:592.5px;width:30px;text-align:center">8</div>
<div class="a" style="left:454.9px;top:398.6px;width:1px;height:184.4px;background:#d9d9d9"></div>
<div class="t ax" style="left:440.4px;top:592.5px;width:30px;text-align:center">10</div>
<div class="a" style="left:526.5px;top:398.6px;width:1px;height:184.4px;background:#d9d9d9"></div>
<div class="t ax" style="left:512.0px;top:592.5px;width:30px;text-align:center">12</div>
<div class="a" style="left:97.5px;top:398.1px;width:429.5px;height:1px;background:#d9d9d9"></div>
<div class="t ax" style="left:40px;top:393.1px;width:45.5px;text-align:right">3500</div>
<div class="a" style="left:97.5px;top:424.4px;width:429.5px;height:1px;background:#d9d9d9"></div>
<div class="t ax" style="left:40px;top:419.3px;width:45.5px;text-align:right">3000</div>
<div class="a" style="left:97.5px;top:450.8px;width:429.5px;height:1px;background:#d9d9d9"></div>
<div class="t ax" style="left:40px;top:445.5px;width:45.5px;text-align:right">2500</div>
<div class="a" style="left:97.5px;top:477.1px;width:429.5px;height:1px;background:#d9d9d9"></div>
<div class="t ax" style="left:40px;top:471.7px;width:45.5px;text-align:right">2000</div>
<div class="a" style="left:97.5px;top:503.5px;width:429.5px;height:1px;background:#d9d9d9"></div>
<div class="t ax" style="left:40px;top:497.9px;width:45.5px;text-align:right">1500</div>
<div class="a" style="left:97.5px;top:529.8px;width:429.5px;height:1px;background:#d9d9d9"></div>
<div class="t ax" style="left:40px;top:524.1px;width:45.5px;text-align:right">1000</div>
<div class="a" style="left:97.5px;top:556.2px;width:429.5px;height:1px;background:#d9d9d9"></div>
<div class="t ax" style="left:40px;top:550.3px;width:45.5px;text-align:right">500</div>
<div class="a" style="left:97.5px;top:582.5px;width:429.5px;height:1px;background:#d9d9d9"></div>
<div class="t ax" style="left:40px;top:576.5px;width:45.5px;text-align:right">0</div>
<div class="a dot" style="left:129.5px;top:495.1px;background:#ed7d31"></div>
<div class="a dot" style="left:165.3px;top:478.5px;background:#ed7d31"></div>
<div class="a dot" style="left:201.1px;top:426.4px;background:#ed7d31"></div>
<div class="a dot" style="left:236.9px;top:411.0px;background:#ed7d31"></div>
<div class="a dot" style="left:129.5px;top:579.2px;background:#4472c4"></div>
<div class="a dot" style="left:165.3px;top:579.2px;background:#4472c4"></div>
<div class="a dot" style="left:201.1px;top:579.2px;background:#4472c4"></div>
<div class="a dot" style="left:236.9px;top:579.2px;background:#4472c4"></div>
<div class="t" style="left:259px;top:362px;font-size:18.4px;color:#595959">Chart Title</div>
<div class="a dot" style="left:257px;top:621.6px;background:#4472c4"></div>
<div class="t ax" style="left:267.3px;top:619px">Sales</div>
<div class="a dot" style="left:302.5px;top:621.6px;background:#ed7d31"></div>
<div class="t ax" style="left:312.3px;top:619px">Orders</div>
<div class="a" style="left:47.1px;top:343.7px;width:8.4px;height:8.4px;background:#fff;border:1.6px solid #6b6b6b;border-radius:50%"></div>
<div class="a" style="left:543.8px;top:343.7px;width:8.4px;height:8.4px;background:#fff;border:1.6px solid #6b6b6b;border-radius:50%"></div>
<div class="a" style="left:46.8px;top:642.3px;width:8.4px;height:8.4px;background:#fff;border:1.6px solid #6b6b6b;border-radius:50%"></div>
<div class="a" style="left:543.1px;top:642.1px;width:8.4px;height:8.4px;background:#fff;border:1.6px solid #6b6b6b;border-radius:50%"></div>
<div class="a" style="left:295.2px;top:344.1px;width:7.6px;height:7.6px;background:#fff;border:1.6px solid #6b6b6b;border-radius:1.5px"></div>
<div class="a" style="left:295.4px;top:643.6px;width:7.6px;height:7.6px;background:#fff;border:1.6px solid #6b6b6b;border-radius:1.5px"></div>
<div class="a" style="left:47.2px;top:493.2px;width:7.6px;height:7.6px;background:#fff;border:1.6px solid #6b6b6b;border-radius:1.5px"></div>
<div class="a" style="left:545.2px;top:493.2px;width:7.6px;height:7.6px;background:#fff;border:1.6px solid #6b6b6b;border-radius:1.5px"></div>

</div></div>
<!-- PANEL -->
<div class="a" style="left:696.5px;top:181px;width:343px;height:506px;background:#f3f3f3;border-left:1.2px solid #c8c6c4"></div>
<div class="t" style="left:706px;top:185.5px;font-size:22.6px;letter-spacing:-0.85px;color:#6e6e6e">Chart</div>
<svg class="a" style="left:1017px;top:191px" width="12" height="12"><path d="M1 1 L11 11 M11 1 L1 11" stroke="#484644" stroke-width="1.3" fill="none"/></svg>
<div class="t" style="left:721.5px;top:226px;font-size:16px;font-weight:bold;color:#242424">Format</div>
<div class="a" style="left:720px;top:249.6px;width:59px;height:2.4px;background:#1e7a45"></div>

<svg class="a" style="left:717px;top:273px" width="10" height="16"><path d="M2 1.5 L8 7.5 L2 13.5" fill="none" stroke="#323130" stroke-width="1.3"/></svg>
<div class="t" style="left:736.5px;top:272px;font-size:15px;color:#242424">Chart Title</div>
<div class="a" style="left:981px;top:269px;width:41.5px;height:21px;background:#1f6e43;border-radius:11px"></div>
<div class="a" style="left:1004.5px;top:273px;width:13px;height:13px;background:#fff;border-radius:50%"></div>

<svg class="a" style="left:717px;top:305.5px" width="10" height="16"><path d="M2 1.5 L8 7.5 L2 13.5" fill="none" stroke="#323130" stroke-width="1.3"/></svg>
<div class="t" style="left:736.5px;top:305px;font-size:15px;color:#242424">Legend</div>
<div class="a" style="left:981px;top:302px;width:41.5px;height:21px;background:#1f6e43;border-radius:11px"></div>
<div class="a" style="left:1004.5px;top:306px;width:13px;height:13px;background:#fff;border-radius:50%"></div>

<div class="a" style="left:714.5px;top:329.6px;width:340px;height:32.8px;border:1.6px solid #5f5e5c"></div>
<svg class="a" style="left:715px;top:341px" width="16" height="10"><path d="M1.5 2 L7.5 8 L13.5 2" fill="none" stroke="#323130" stroke-width="1.3"/></svg>
<div class="t" style="left:736.5px;top:338.5px;font-size:14.6px;font-weight:bold;color:#242424">Horizontal Axis</div>

<div class="t pb" style="left:735.3px;top:378.5px">Bounds</div>
<div class="t pl" style="left:735.3px;top:407px">Minimum</div>
<div class="a inp" style="left:874.5px;top:400.3px"></div>
<div class="t pv" style="left:884px;top:406.5px">0</div>
<div class="t pl" style="left:735.3px;top:440px">Maximum</div>
<div class="a inp" style="left:874.5px;top:433.3px"></div>
<div class="t pv" style="left:884px;top:439.5px">12</div>

<div class="t pb" style="left:735.3px;top:485.5px">Units</div>
<div class="t pl" style="left:735.3px;top:515px">Major Units</div>
<div class="a inp" style="left:874.5px;top:507.8px"></div>
<div class="t pv" style="left:884px;top:514px">2</div>
<div class="t pl" style="left:735.3px;top:548px">Minor Units</div>
<div class="a inp" style="left:874.5px;top:541.4px"></div>
<div class="t pv" style="left:884px;top:547.5px">0.4</div>

<div class="t pb" style="left:735.3px;top:594px">Tick Marks</div>
<div class="t pl" style="left:735.3px;top:622px">Major type</div>
<div class="a inp" style="left:874.5px;top:615.3px"></div>
<div class="t pv" style="left:884.5px;top:623.5px">None</div>
<svg class="a" style="left:977px;top:622px" width="15" height="10"><path d="M1.5 1.5 L7.5 7.5 L13.5 1.5" fill="none" stroke="#605e5c" stroke-width="1.2"/></svg>
<div class="t pl" style="left:735.3px;top:655px">Minor type</div>
<div class="a inp" style="left:874.5px;top:648.3px"></div>
<div class="t pv" style="left:884.5px;top:656.5px">None</div>
<svg class="a" style="left:977px;top:655px" width="15" height="10"><path d="M1.5 1.5 L7.5 7.5 L13.5 1.5" fill="none" stroke="#605e5c" stroke-width="1.2"/></svg>
<svg class="a" style="left:1003px;top:404.3px" width="18" height="17"><path d="M2 0.5 V6.1 H7.8 M2 6.1 C5 2.5 9.5 0.3 12.5 2.8 C15.5 5.3 14.5 8.8 6.8 14.8" fill="none" stroke="#bdbdbd" stroke-width="1.25"/></svg>
<svg class="a" style="left:1003px;top:437.3px" width="18" height="17"><path d="M2 0.5 V6.1 H7.8 M2 6.1 C5 2.5 9.5 0.3 12.5 2.8 C15.5 5.3 14.5 8.8 6.8 14.8" fill="none" stroke="#bdbdbd" stroke-width="1.25"/></svg>
<svg class="a" style="left:1003px;top:511.8px" width="18" height="17"><path d="M2 0.5 V6.1 H7.8 M2 6.1 C5 2.5 9.5 0.3 12.5 2.8 C15.5 5.3 14.5 8.8 6.8 14.8" fill="none" stroke="#bdbdbd" stroke-width="1.25"/></svg>
<svg class="a" style="left:1003px;top:545.4px" width="18" height="17"><path d="M2 0.5 V6.1 H7.8 M2 6.1 C5 2.5 9.5 0.3 12.5 2.8 C15.5 5.3 14.5 8.8 6.8 14.8" fill="none" stroke="#bdbdbd" stroke-width="1.25"/></svg>

</div>
</div>
</body></html>
